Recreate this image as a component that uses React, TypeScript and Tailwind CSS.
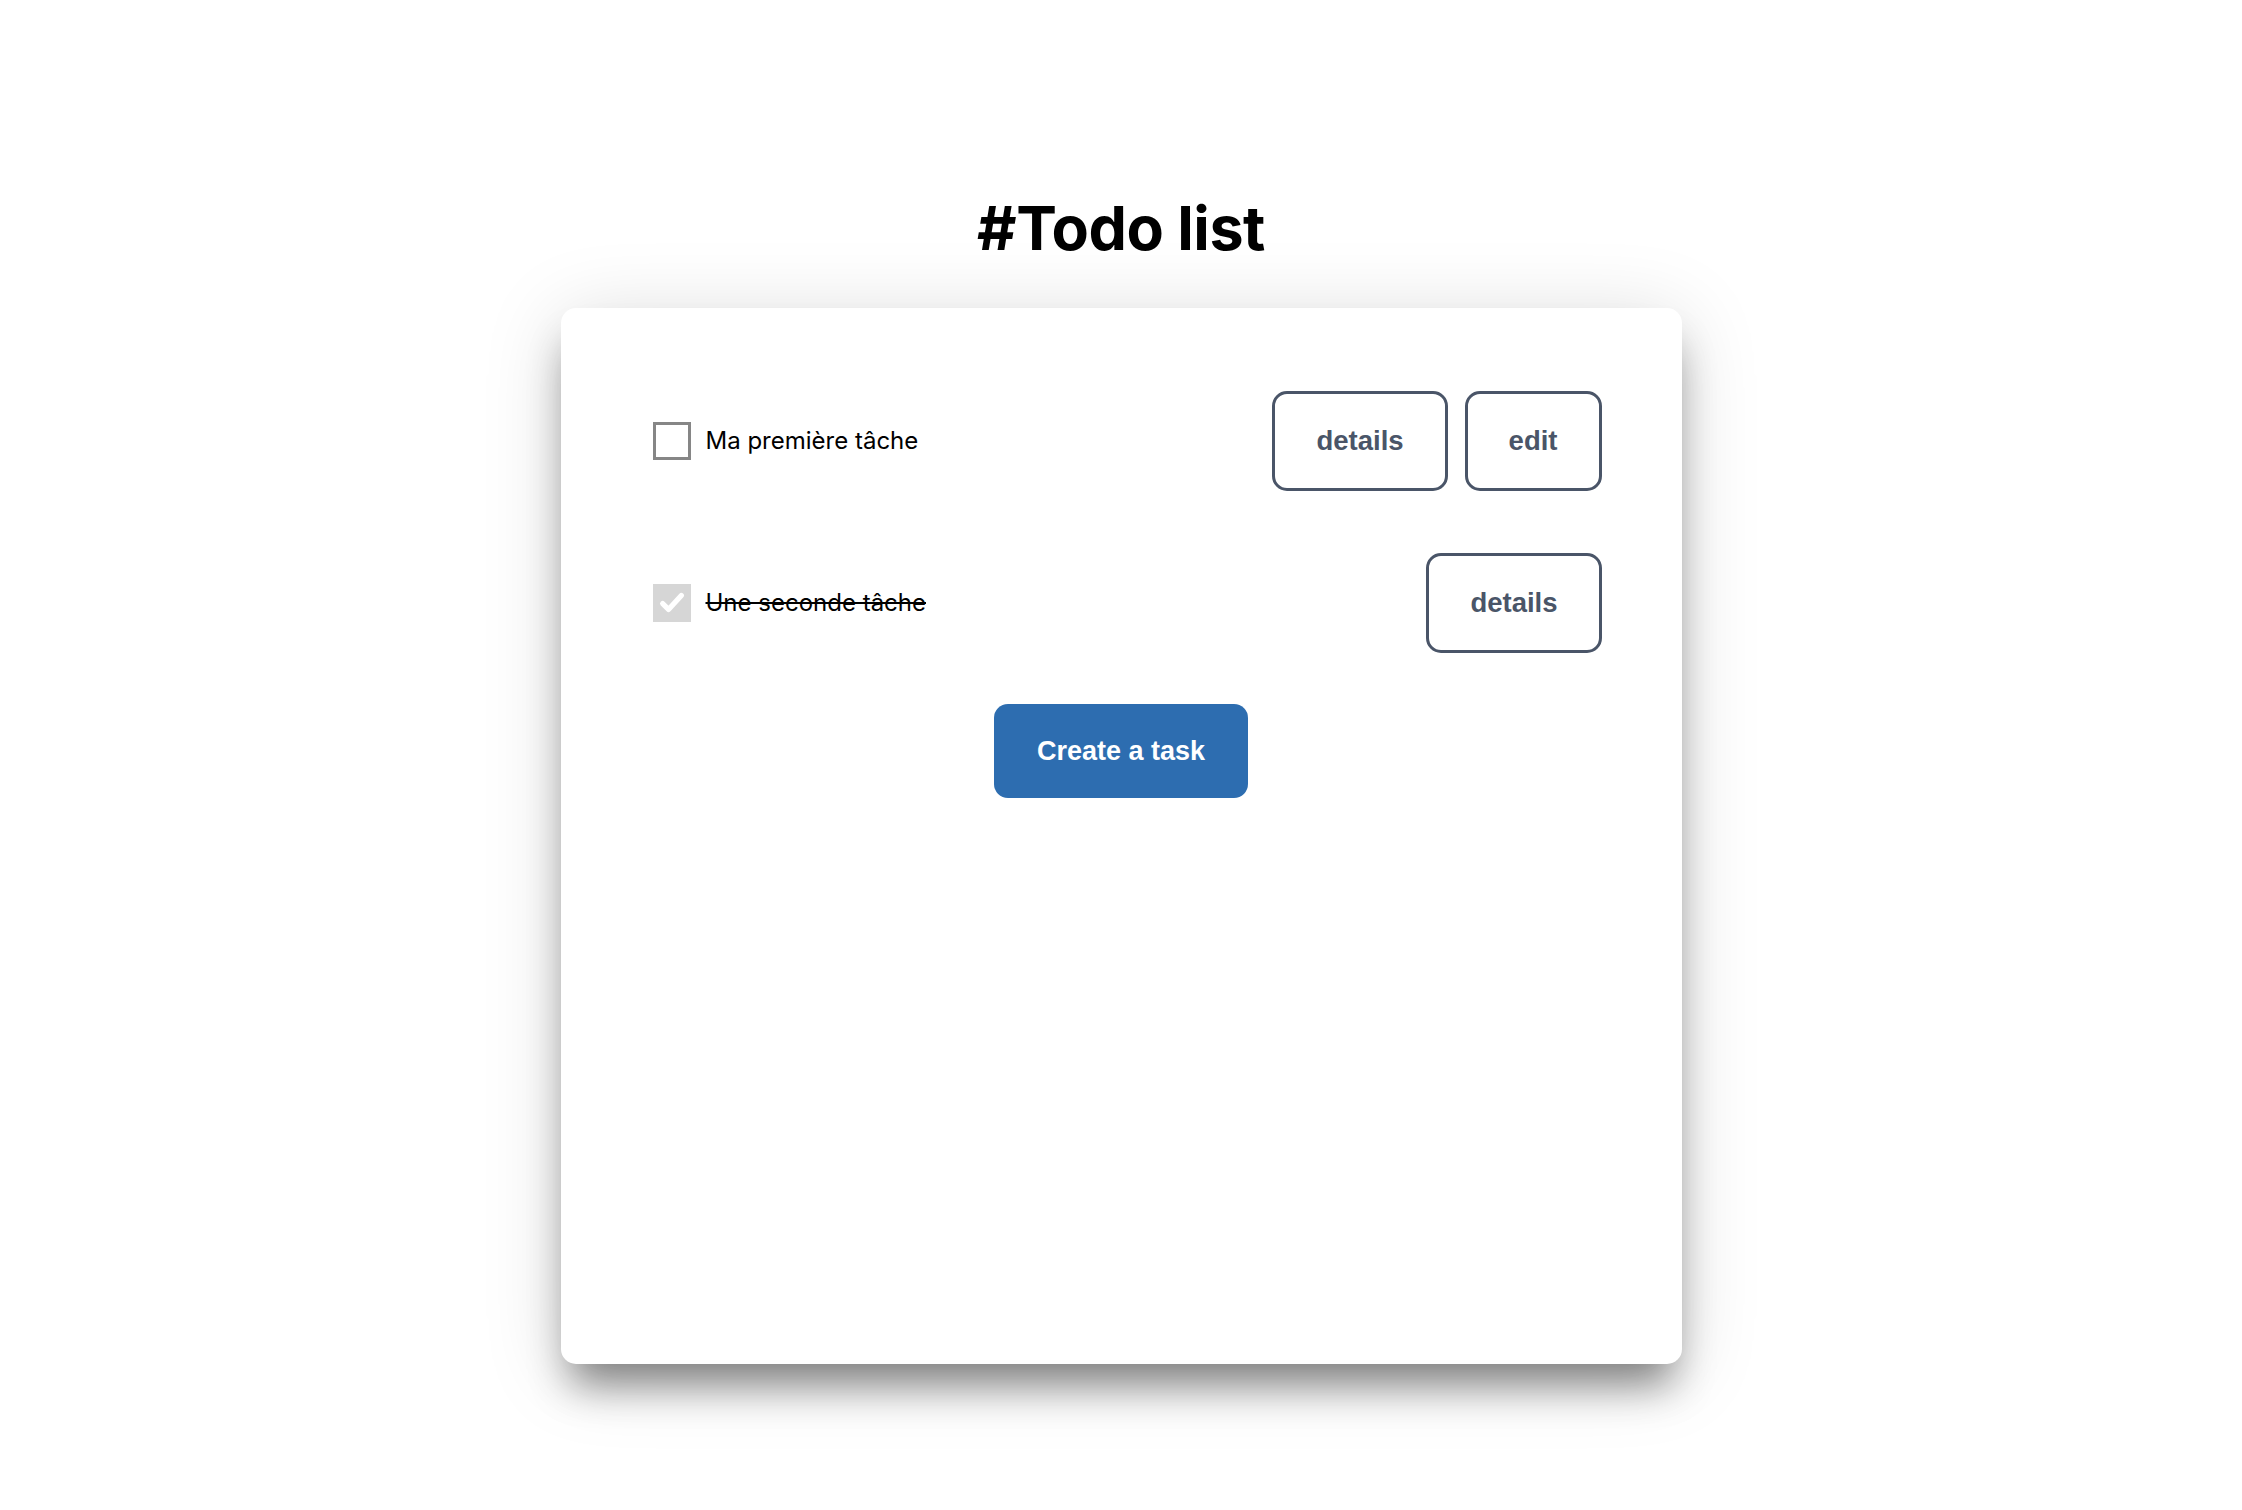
import * as React from "react"

type Task = { id: number; title: string; done: boolean }

const tasks: Task[] = [
  { id: 1, title: "Ma première tâche", done: false },
  { id: 2, title: "Une seconde tâche", done: true },
]

const OutlineButton = ({ label }: { label: string }) => (
  <button className="h-[100px] px-[41px] border-[3px] border-[#4a5568] rounded-[15px] bg-white text-[#4a5568] text-[27.5px] font-bold font-['Liberation_Sans',Arial,sans-serif]">
    {label}
  </button>
)

const TaskRow = ({ task }: { task: Task }) => (
  <div className="flex items-center justify-between h-[100px] pl-3">
    <label className="flex items-center gap-[15px]">
      {task.done ? (
        <span className="w-[38px] h-[38px] bg-[#d6d6d6] flex items-center justify-center">
          <svg width="28" height="28" viewBox="0 0 24 24" fill="none">
            <path d="M4 12.5l5 5L20 5.5" stroke="white" strokeWidth="4.5" strokeLinecap="round" strokeLinejoin="round" />
          </svg>
        </span>
      ) : (
        <span className="w-[38px] h-[38px] border-[3px] border-[#868686] bg-white" />
      )}
      <span className={"text-[24px] text-black font-['Inter',sans-serif] " + (task.done ? "line-through decoration-2" : "")}>
        {task.title}
      </span>
    </label>
    <div className="flex gap-[17px]">
      <OutlineButton label="details" />
      {!task.done && <OutlineButton label="edit" />}
    </div>
  </div>
)

export default function App() {
  return (
    <div className="min-h-screen bg-white flex flex-col items-center pt-[191px] pb-[146px]">
      <h1 className="text-[61px] leading-[74px] font-bold text-black font-['Inter',sans-serif] tracking-[-0.5px]">
        #Todo list
      </h1>
      <div className="mt-[43px] w-[1121px] h-[1056px] bg-white rounded-[15px] px-[80px] pt-[83px] shadow-[0_30px_40px_-10px_rgba(0,0,0,0.45),0_10px_80px_rgba(0,0,0,0.15)]">
        <div className="flex flex-col gap-[62px]">
          {tasks.map((t) => (
            <TaskRow key={t.id} task={t} />
          ))}
        </div>
        <div className="flex justify-center mt-[51px]">
          <button className="h-[94px] px-[43px] rounded-[14px] bg-[#2d6db0] text-white text-[27px] font-bold font-['Liberation_Sans',Arial,sans-serif]">
            Create a task
          </button>
        </div>
      </div>
    </div>
  )
}
